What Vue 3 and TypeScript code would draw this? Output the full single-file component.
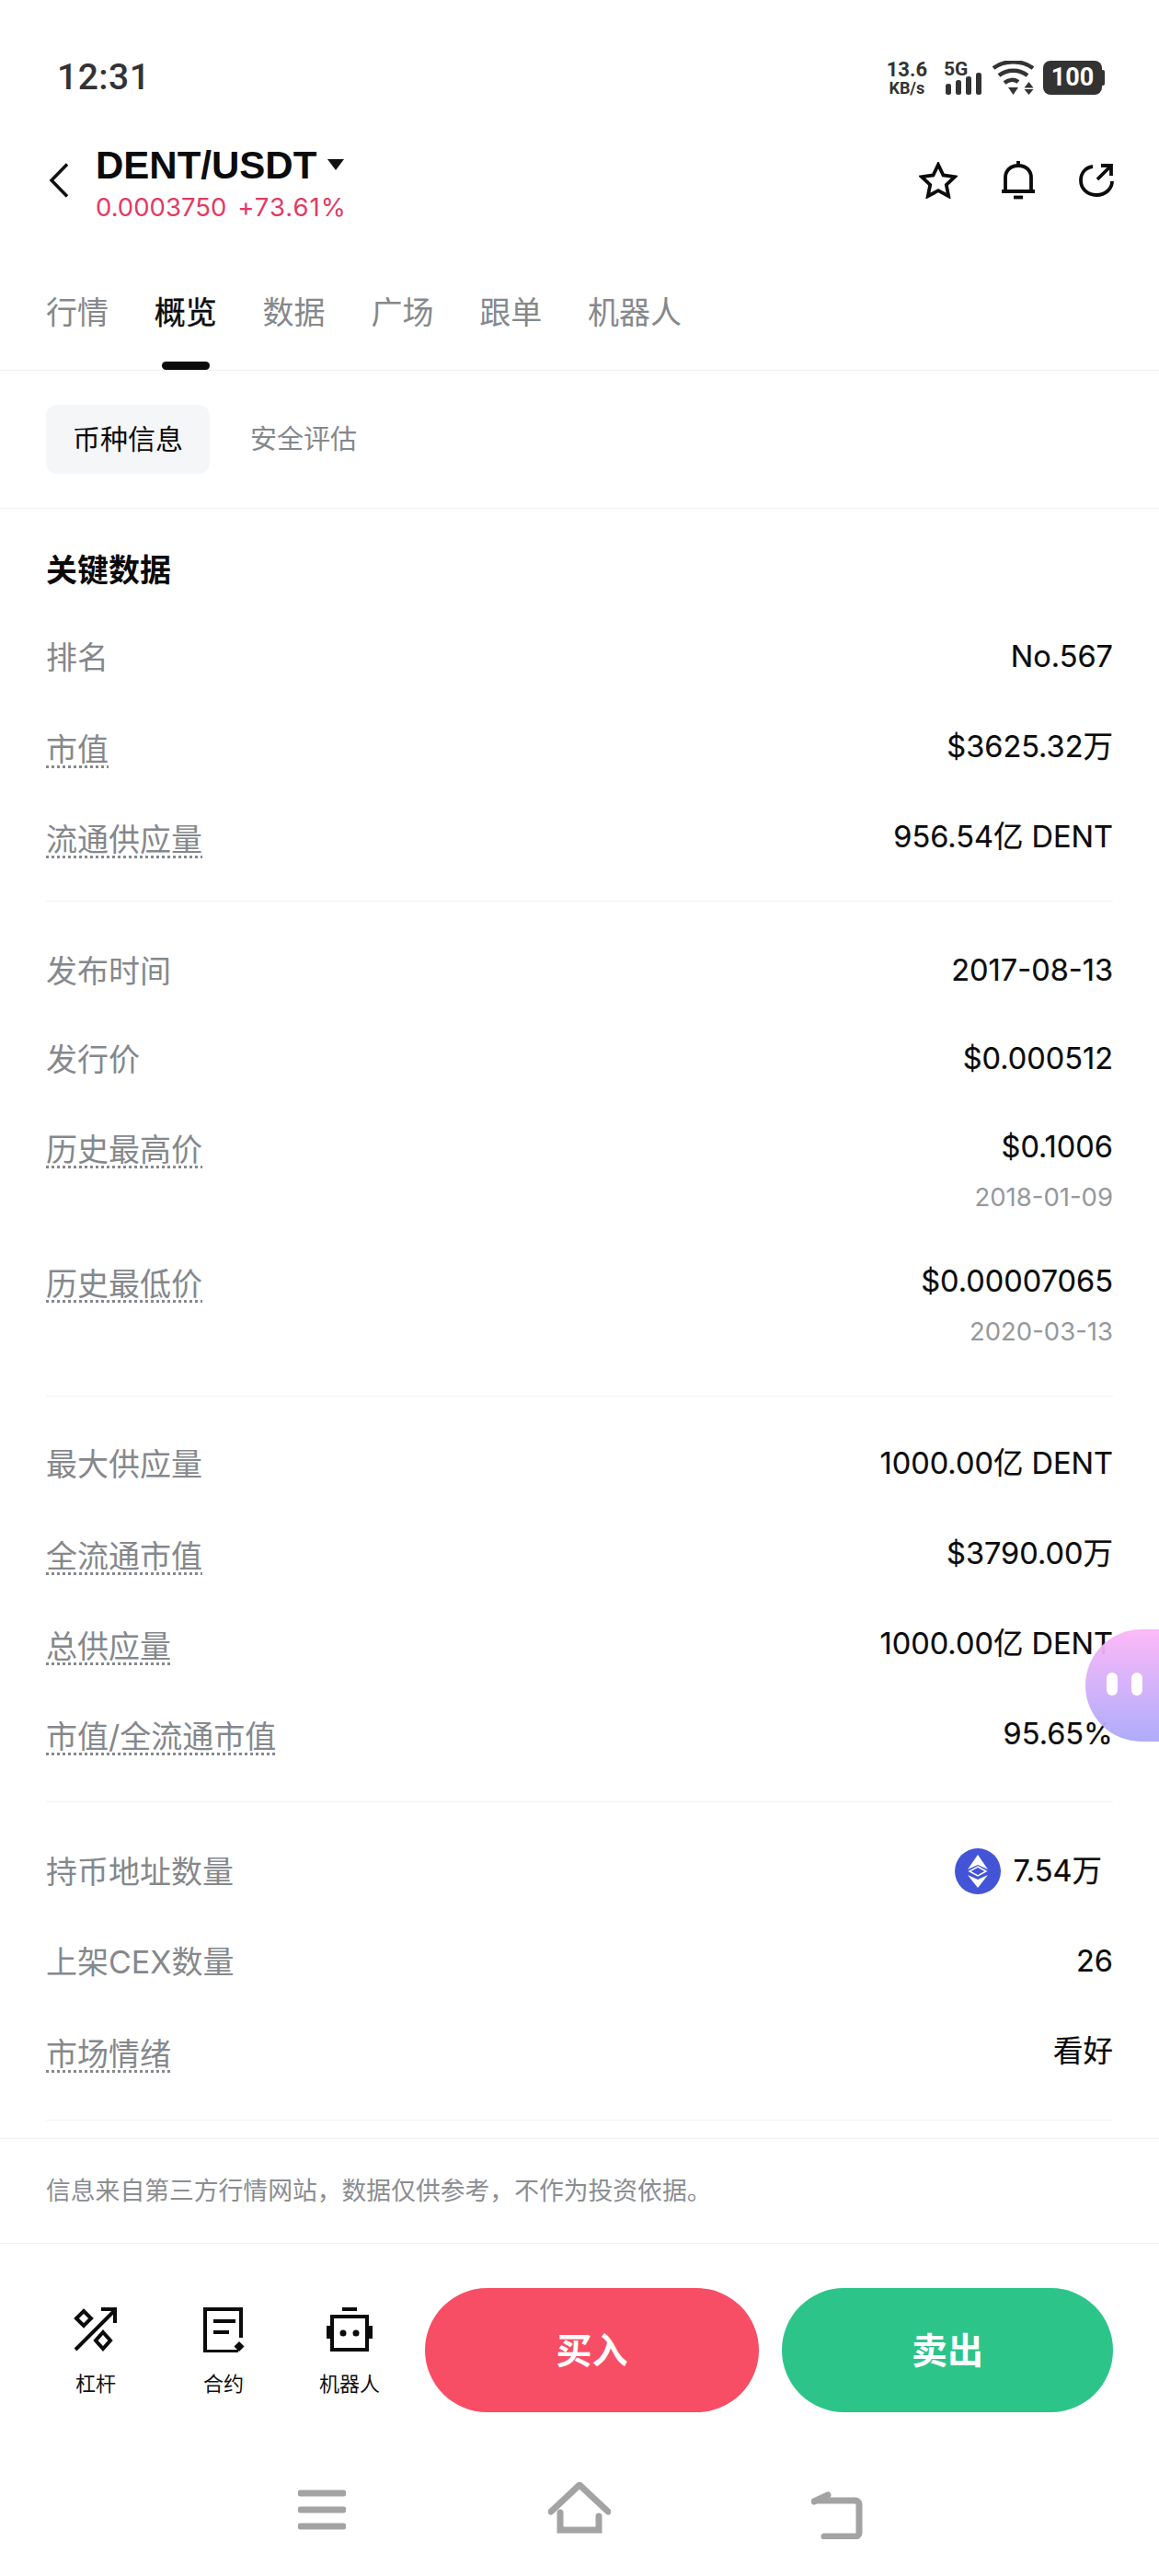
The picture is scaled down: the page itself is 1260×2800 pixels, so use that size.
<script setup lang="ts">
interface Row {
  label: string;
  value: string;
  sub?: string;
  dotted?: boolean;
  eth?: boolean;
}

const tabs = ["行情", "概览", "数据", "广场", "跟单", "机器人"];

const groupA: Row[] = [
  { label: "排名", value: "No.567" },
  { label: "市值", value: "$3625.32万", dotted: true },
  { label: "流通供应量", value: "956.54亿 DENT", dotted: true },
];

const groupB: Row[] = [
  { label: "发布时间", value: "2017-08-13" },
  { label: "发行价", value: "$0.000512" },
  { label: "历史最高价", value: "$0.1006", sub: "2018-01-09", dotted: true },
  { label: "历史最低价", value: "$0.00007065", sub: "2020-03-13", dotted: true },
];

const groupC: Row[] = [
  { label: "最大供应量", value: "1000.00亿 DENT" },
  { label: "全流通市值", value: "$3790.00万", dotted: true },
  { label: "总供应量", value: "1000.00亿 DENT", dotted: true },
  { label: "市值/全流通市值", value: "95.65%", dotted: true },
];

const groupD: Row[] = [
  { label: "持币地址数量", value: "7.54万", eth: true },
  { label: "上架CEX数量", value: "26" },
  { label: "市场情绪", value: "看好", dotted: true },
];

const groups = [groupA, groupB, groupC, groupD];
</script>

<template>
  <div class="page">
    <div class="status">
      <span class="time">12:31</span>
      <div class="status-right">
        <div class="speed"><span>13.6</span><span class="speed-unit">KB/s</span></div>
        <div class="signal">
          <span class="five-g">5G</span>
          <svg width="42" height="25" viewBox="0 0 42 25" class="bars">
            <rect x="1" y="12" width="6" height="12" rx="2.500" />
            <rect x="12" y="8" width="6" height="16" rx="2.500" />
            <rect x="23" y="4" width="6" height="20" rx="2.500" />
            <rect x="34" y="0" width="6" height="24" rx="2.500" />
          </svg>
        </div>
        <svg width="45" height="37" viewBox="0 0 45 37" class="wifi">
          <path d="M1 8C13 -1 32 -1 44 8" />
          <path d="M7 16C16 9 29 9 38 16" />
          <path d="M13 24C18 20 24 20 28 23" />
          <path class="fill" d="M17 29h11l-5.500 8zM39.500 23l5 6.500h-10zM34.500 31h10l-5 6z" />
        </svg>
        <div class="battery"><span>100</span></div>
      </div>
    </div>

    <div class="header">
      <svg class="back" width="22" height="38" viewBox="0 0 22 38">
        <path d="M20 1.500L3 19l17 17.500" />
      </svg>
      <div class="pair">
        <div class="pair-name">DENT/USDT<i class="caret"></i></div>
        <div class="pair-price"><span>0.0003750</span><span class="change">+73.61%</span></div>
      </div>
      <div class="header-icons">
        <svg width="42" height="40" viewBox="0 0 42 40">
          <path d="M21 3l5.500 11.500 12.500 1.700-9.200 8.600 2.400 12.400L21 31.200 9.800 37.200l2.400-12.400L3 16.200l12.500-1.700z" />
        </svg>
        <svg width="36" height="42" viewBox="0 0 36 42">
          <path d="M18 0v5M0 33h36M4 33V18C4 10 10 5 18 5s14 5 14 13v15" />
          <path d="M13 39.500h10" />
        </svg>
        <svg width="38" height="36" viewBox="0 0 38 36">
          <path d="M15 3C7 4 2 10 2 18c0 9 7 16 17 16s17-7 17-15" />
          <path d="M20 17L35 2M24 2h11v11" />
        </svg>
      </div>
    </div>

    <div class="tabs">
      <div v-for="(t, i) in tabs" :key="t" class="tab" :class="{ active: i === 1 }">{{ t }}</div>
    </div>

    <div class="subtabs">
      <div class="pill">币种信息</div>
      <div class="subtab">安全评估</div>
    </div>

    <div class="content">
      <div class="section-title">关键数据</div>
      <div v-for="(g, gi) in groups" :key="gi" class="group" :class="`group-${gi}`">
        <div v-for="r in g" :key="r.label" class="row" :class="{ 'has-sub': r.sub }">
          <span class="label" :class="{ 'label-dotted': r.dotted }"><span :class="{ dotted: r.dotted }">{{ r.label }}</span></span>
          <div class="right">
            <div class="value">
              <svg v-if="r.eth" class="eth" width="50" height="50" viewBox="0 0 50 50">
                <circle cx="25" cy="25" r="25" fill="#4355d6" />
                <path d="M25 7l11 16-11-5-11 5z" fill="#fff" />
                <path d="M25 20l9 5-9 5-9-5z" fill="#4355d6" stroke="#fff" stroke-width="1.500" />
                <path d="M25 43L14 29l11 5 11-5z" fill="#fff" />
              </svg>
              {{ r.value }}
            </div>
            <div v-if="r.sub" class="sub">{{ r.sub }}</div>
          </div>
        </div>
      </div>
    </div>

    <div class="disclaimer">信息来自第三方行情网站，数据仅供参考，不作为投资依据。</div>

    <div class="toolbar">
      <div class="tools">
        <div class="tool">
          <svg width="50" height="50" viewBox="0 0 50 50">
            <path d="M3 47L46 4M31 3h15v15" />
            <path d="M12 5l8 8-8 8-8-8zM33 28l8 9-8 9-8-9z" />
          </svg>
          <span>杠杆</span>
        </div>
        <div class="tool">
          <svg width="50" height="50" viewBox="0 0 50 50">
            <path d="M44 34V3H5v46h36" />
            <path d="M14 16h24M14 28h17" />
            <path class="fill" d="M42 38l5.500 5.500L42 49l-5.500-5.500z" />
          </svg>
          <span>合约</span>
        </div>
        <div class="tool tool-wide">
          <svg width="50" height="50" viewBox="0 0 50 50">
            <path d="M6 11h38v36H6zM17 3h16" />
            <path d="M2 21v14M48 21v14" />
            <circle class="fill" cx="18" cy="29" r="3.500" />
            <circle class="fill" cx="32" cy="29" r="3.500" />
          </svg>
          <span>机器人</span>
        </div>
      </div>
      <div class="btn buy">买入</div>
      <div class="btn sell">卖出</div>
    </div>

    <div class="nav">
      <svg width="52" height="44" viewBox="0 0 52 44">
        <path d="M3 4h46M3 22h46M3 40h46" />
      </svg>
      <svg width="68" height="56" viewBox="0 0 68 56">
        <path d="M3 32L34 3l31 29" />
        <path d="M13 33v19h42V37" />
      </svg>
      <svg width="56" height="54" viewBox="0 0 56 54">
        <path d="M3 13L18 6M6 12h42a5 5 0 0 1 4 4v31a4 4 0 0 1-4 4H14" />
      </svg>
    </div>

    <div class="float-bot">
      <i></i><i></i>
    </div>
  </div>
</template>

<style>
html,
body {
  margin: 0;
  background: #fff;
}
</style>

<style scoped>
.page {
  position: relative;
  width: 1260px;
  height: 2800px;
  overflow: hidden;
  display: flex;
  flex-direction: column;
  background: #fff;
  font-family: "Liberation Sans", "Noto Sans CJK SC", sans-serif;
  color: #0b0b0b;
}

.status {
  height: 130px;
  box-sizing: border-box;
  padding: 0 62px 0 62px;
  display: flex;
  align-items: flex-start;
  justify-content: space-between;
  flex-shrink: 0;
}

.time {
  margin-top: 62px;
  font-family: Roboto, sans-serif;
  font-weight: 500;
  font-size: 39px;
  line-height: 44px;
  color: #333;
  letter-spacing: 0.500px;
}

.status-right {
  margin-top: 66px;
  display: flex;
  align-items: flex-start;
  color: #333;
}

.speed {
  display: flex;
  flex-direction: column;
  align-items: center;
  font-family: Roboto, sans-serif;
  font-weight: 700;
  font-size: 22px;
  line-height: 20px;
  margin-right: 18px;
}

.speed-unit {
  margin-top: 2px;
  font-size: 18px;
  line-height: 16px;
}

.signal {
  position: relative;
  width: 44px;
  height: 37px;
  margin-right: 9px;
}

.five-g {
  position: absolute;
  left: 0;
  top: 0;
  font-family: Roboto, sans-serif;
  font-weight: 700;
  font-size: 21px;
  line-height: 18px;
}

.bars {
  position: absolute;
  left: 1px;
  top: 13px;
  fill: #333;
}

.wifi {
  margin-right: 10px;
}

.wifi path {
  fill: none;
  stroke: #333;
  stroke-width: 4.500;
}

.wifi path.fill {
  fill: #333;
  stroke: none;
}

.battery {
  position: relative;
  width: 64px;
  height: 37px;
  background: #333;
  border-radius: 8px;
  color: #fff;
  font-family: Roboto, sans-serif;
  font-weight: 700;
  font-size: 27px;
  line-height: 37px;
  text-align: center;
}

.battery::after {
  content: "";
  position: absolute;
  right: -3px;
  top: 10px;
  width: 3px;
  height: 17px;
  background: #333;
  border-radius: 0 2px 2px 0;
}

.header {
  height: 140px;
  padding-left: 53px;
  padding-right: 49px;
  display: flex;
  align-items: flex-start;
  flex-shrink: 0;
}

.back {
  margin-top: 47px;
  flex-shrink: 0;
}

.back path {
  fill: none;
  stroke: #111;
  stroke-width: 3.500;
}

.pair {
  margin-left: 29px;
  margin-top: 25px;
}

.pair-name {
  font-size: 42px;
  line-height: 50px;
  font-weight: 700;
  display: flex;
  align-items: center;
}

.caret {
  display: block;
  width: 0;
  height: 0;
  margin-left: 12px;
  margin-bottom: 2px;
  border-left: 9px solid transparent;
  border-right: 9px solid transparent;
  border-top: 12px solid #111;
}

.pair-price {
  margin-top: 3px;
  display: flex;
  gap: 12px;
  font-family: Inter, sans-serif;
  font-size: 27.500px;
  line-height: 34px;
  color: #e23a64;
}

.change {
  letter-spacing: 1px;
}

.header-icons {
  margin-left: auto;
  margin-top: 45px;
  display: flex;
  align-items: center;
  gap: 48px;
}

.header-icons path {
  fill: none;
  stroke: #0b0b0b;
  stroke-width: 3.800;
}

.tabs {
  height: 133px;
  box-sizing: border-box;
  padding-left: 50px;
  display: flex;
  gap: 49.800px;
  border-bottom: 1px solid #f2f3f4;
  flex-shrink: 0;
}

.tab {
  position: relative;
  padding-top: 48px;
  font-size: 34px;
  line-height: 44px;
  color: #85888c;
}

.tab.active {
  color: #0b0b0b;
  -webkit-text-stroke: 0.400px #0b0b0b;
}

.tab.active::after {
  content: "";
  position: absolute;
  left: 8px;
  right: 8px;
  bottom: 0;
  height: 9px;
  border-radius: 5px;
  background: #0b0b0b;
}

.subtabs {
  height: 150px;
  box-sizing: border-box;
  padding: 37px 50px 0;
  display: flex;
  border-bottom: 1px solid #f2f3f4;
  flex-shrink: 0;
}

.pill {
  width: 178px;
  height: 75px;
  border-radius: 12px;
  background: #f5f6f7;
  font-size: 30px;
  line-height: 76px;
  text-align: center;
}

.subtab {
  margin-left: 44px;
  font-size: 29px;
  line-height: 76px;
  color: #85888c;
}

.content {
  padding: 0 50px;
  flex-shrink: 0;
}

.section-title {
  height: 112px;
  box-sizing: border-box;
  padding-top: 45px;
  font-size: 34px;
  line-height: 44px;
  font-weight: 700;
}

.group {
  padding: 0 0 20px;
  margin-bottom: 27px;
  border-bottom: 1px solid #f2f3f4;
}

.group-1 {
  margin-bottom: 24px;
  padding-bottom: 26px;
}

.group-2 {
  padding-bottom: 24px;
  margin-bottom: 26px;
}

.group-3 {
  padding-bottom: 25px;
  margin-bottom: 19px;
}

.row {
  display: flex;
  justify-content: space-between;
  align-items: flex-start;
  height: 98px;
}

.group-1 .row {
  height: 96px;
}

.group-1 .row.has-sub {
  height: 146px;
}

.label {
  padding-top: 1px;
  font-family: Inter, "Noto Sans CJK SC", sans-serif;
  font-size: 34px;
  line-height: 98px;
  color: #85888c;
}

.label-dotted {
  padding-top: 3px;
}

.group-1 .label,
.group-1 .value {
  line-height: 96px;
}

.dotted {
  text-decoration: underline dotted #85888c 3px;
  text-underline-offset: 5px;
  text-decoration-skip-ink: none;
}

.right {
  display: flex;
  flex-direction: column;
  align-items: flex-end;
}

.value {
  display: flex;
  align-items: center;
  font-family: Inter, "Noto Sans CJK SC", sans-serif;
  font-size: 32.500px;
  line-height: 98px;
  -webkit-text-stroke: 0.200px #0b0b0b;
}

.eth {
  margin-right: 14px;
}

.group-3 .row:first-child .value {
  margin-right: 12px;
}

.sub {
  margin-top: -10px;
  font-family: Inter, sans-serif;
  font-size: 27.500px;
  line-height: 32px;
  color: #95989c;
}

.disclaimer {
  height: 115px;
  box-sizing: border-box;
  border-top: 1px solid #f2f3f4;
  border-bottom: 1px solid #f2f3f4;
  padding-left: 50px;
  font-size: 26.800px;
  line-height: 115px;
  color: #8a8d91;
  flex-shrink: 0;
}

.toolbar {
  height: 223px;
  box-sizing: border-box;
  padding: 48px 50px 0 0;
  display: flex;
  flex-shrink: 0;
}

.tools {
  display: flex;
  width: 462px;
  flex-shrink: 0;
}

.tool {
  display: flex;
  flex-direction: column;
  align-items: center;
  position: absolute;
  width: 100px;
}

.tool:nth-child(1) {
  left: 54px;
}

.tool:nth-child(2) {
  left: 193px;
}

.tool:nth-child(3) {
  left: 330px;
}

.tool svg {
  margin-top: 20px;
}

.tool path {
  fill: none;
  stroke: #0b0b0b;
  stroke-width: 4;
}

.tool path.fill,
.tool circle.fill {
  fill: #0b0b0b;
  stroke: none;
}

.tool span {
  margin-top: 20px;
  font-size: 22px;
  line-height: 30px;
  color: #111;
}

.btn {
  width: 363px;
  height: 135px;
  border-radius: 68px;
  color: #fff;
  font-size: 39px;
  font-weight: 700;
  line-height: 137px;
  text-align: center;
  flex-shrink: 0;
}

.buy {
  background: #f84e65;
}

.sell {
  width: 360px;
  margin-left: 25px;
  background: #2dc48a;
}

.nav {
  flex: 1;
  position: relative;
}

.nav svg {
  position: absolute;
  top: 44px;
}

.nav svg:nth-child(1) {
  left: 324px;
}

.nav svg:nth-child(2) {
  left: 596px;
  top: 36px;
}

.nav svg:nth-child(3) {
  left: 882px;
}

.nav path {
  fill: none;
  stroke: #a3a3a3;
  stroke-width: 7;
  stroke-linecap: round;
}

.float-bot {
  position: absolute;
  right: 0;
  top: 1771px;
  width: 80px;
  height: 122px;
  border-radius: 61px 0 0 61px;
  background: linear-gradient(180deg, #fdb6f8 0%, #aaa8fb 100%);
  opacity: 0.95;
}

.float-bot i {
  position: absolute;
  top: 47px;
  width: 12px;
  height: 25px;
  border-radius: 6px;
  background: #fff;
}

.float-bot i:nth-child(1) {
  left: 23px;
}

.float-bot i:nth-child(2) {
  left: 50px;
}
</style>
